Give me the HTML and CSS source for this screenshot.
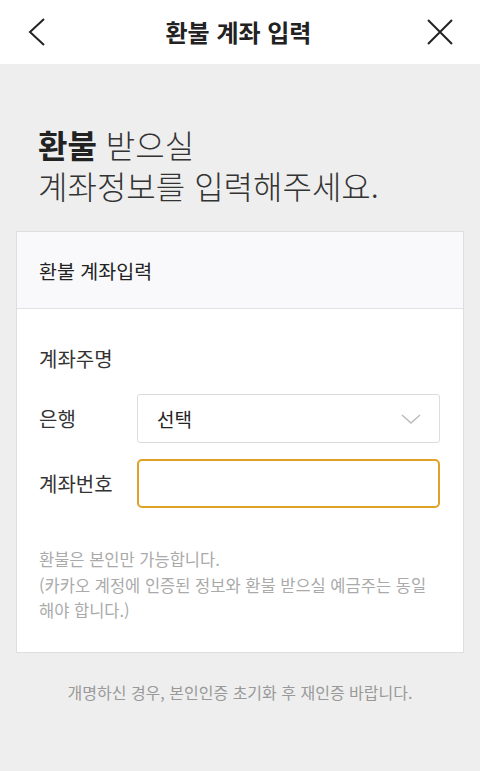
FILE: index.html
```html
<!DOCTYPE html>
<html lang="ko">
<head>
<meta charset="utf-8">
<link rel="stylesheet" href="styles.css">
</head>
<body>
<header class="topbar">
  <button class="icon-btn" aria-label="뒤로">
    <svg width="24" height="30" viewBox="0 0 24 30"><polyline points="17,2 3,15 17,28" fill="none" stroke="#222" stroke-width="2"/></svg>
  </button>
  <h1 class="title">환불 계좌 입력</h1>
  <button class="icon-btn" aria-label="닫기">
    <svg width="28" height="28" viewBox="0 0 28 28"><path d="M2 2 L26 26 M26 2 L2 26" fill="none" stroke="#222" stroke-width="2"/></svg>
  </button>
</header>
<main class="content">
  <p class="headline"><strong>환불</strong> 받으실<br>계좌정보를 입력해주세요.</p>
  <section class="card">
    <div class="card-head">환불 계좌입력</div>
    <div class="card-body">
      <div class="row row-name"><span class="label">계좌주명</span></div>
      <div class="row">
        <span class="label">은행</span>
        <div class="select">
          <span>선택</span>
          <svg width="20" height="10" viewBox="0 0 20 10"><polyline points="1,1 10,9 19,1" fill="none" stroke="#bbb" stroke-width="1.5"/></svg>
        </div>
      </div>
      <div class="row">
        <span class="label">계좌번호</span>
        <div class="input"></div>
      </div>
      <p class="note">환불은 본인만 가능합니다.<br>(카카오 계정에 인증된 정보와 환불 받으실 예금주는 동일 해야 합니다.)</p>
    </div>
  </section>
  <p class="foot">개명하신 경우, 본인인증 초기화 후 재인증 바랍니다.</p>
</main>
</body>
</html>
```
FILE: styles.css
```css
* { box-sizing: border-box; }
html, body { margin: 0; padding: 0; }
body {
  background: #eeeeee;
  font-family: "Noto Sans CJK KR", "Noto Sans", sans-serif;
  color: #333;
  width: 480px;
  height: 771px;
  overflow: hidden;
}
.topbar {
  height: 64px;
  background: #fff;
  display: flex;
  align-items: center;
  justify-content: space-between;
  padding: 0 26px 0 27px;
}
.icon-btn {
  border: 0;
  background: none;
  padding: 0;
  display: flex;
  align-items: center;
}
.title {
  margin: 0;
  font-size: 24px;
  line-height: 30px;
  font-weight: 700;
  color: #222;
}
.content { padding: 60px 16px 0; }
.headline {
  margin: 0 0 25px 22px;
  font-size: 32px;
  line-height: 41px;
  font-weight: 300;
  color: #333;
}
.headline strong { font-weight: 700; color: #222; }
.card {
  background: #fff;
  border: 1px solid #dedede;
}
.card-head {
  background: #f9f9fb;
  height: 77px;
  border-bottom: 1px solid #e2e2e2;
  display: flex;
  align-items: center;
  padding-left: 22px;
  font-size: 19.5px;
  color: #222;
}
.card-body { padding: 38px 23px 28px 22px; }
.row {
  display: flex;
  align-items: center;
  margin-bottom: 16px;
}
.row-name { margin-bottom: 23px; height: 24px; }
.label {
  width: 98px;
  flex: none;
  font-size: 20px;
  line-height: 24px;
  color: #333;
}
.select {
  flex: 1;
  height: 49px;
  border: 1px solid #dcdcdc;
  border-radius: 3px;
  display: flex;
  align-items: center;
  justify-content: space-between;
  padding: 0 18px 0 19px;
  font-size: 19px;
  color: #222;
}
.input {
  flex: 1;
  height: 49px;
  border: 2px solid #dfa226;
  border-radius: 5px;
}
.note {
  margin: 39px 0 0;
  font-size: 16.5px;
  line-height: 25.5px;
  color: #aaaaaa;
}
.foot {
  margin: 27px 0 0;
  text-align: center;
  font-size: 16px;
  line-height: 24px;
  color: #999;
}
```
